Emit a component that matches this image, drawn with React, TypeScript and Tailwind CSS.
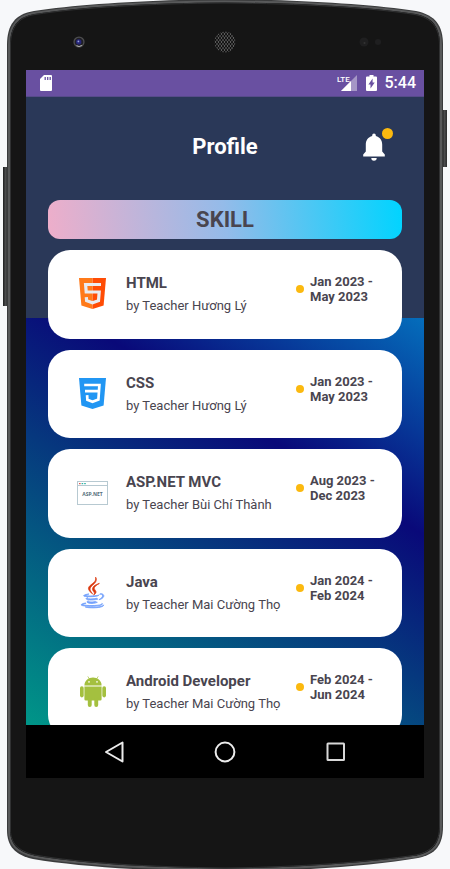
import React from "react";

type Skill = {
  name: string;
  teacher: string;
  from: string;
  to: string;
  icon: React.ReactNode;
};

function HtmlIcon() {
  return (
    <svg viewBox="0 0 27 31" className="h-[31px] w-[27px]" aria-hidden="true">
      <path d="M0 0H13.5V31L2.4 27.6Z" fill="#ff7a1a" />
      <path d="M13.5 0H27L24.6 27.6L13.5 31Z" fill="#ff4c05" />
      <path
        d="M22 6.5H6.6L7.2 14H20.2L19.5 22.7L13.5 24.8L7.6 22.7L7.3 19.2"
        fill="none"
        stroke="#e9ebf0"
        strokeWidth="3.2"
      />
    </svg>
  );
}

function CssIcon() {
  return (
    <svg viewBox="0 0 27 31" className="h-[31px] w-[27px]" aria-hidden="true">
      <path d="M0 0H27L24.6 27.6L13.5 31L2.4 27.6Z" fill="#2196f3" />
      <path
        d="M5.2 7H20.4L19.4 21.5L13.5 23.7L8.4 21.8L8.1 17.2M6 13.2H19.8"
        fill="none"
        stroke="#ffffff"
        strokeWidth="2.7"
      />
    </svg>
  );
}

function AspNetIcon() {
  return (
    <svg viewBox="0 0 31 24" className="h-[24px] w-[31px]" aria-hidden="true">
      <rect x="0.5" y="0.5" width="30" height="23" fill="#fff" stroke="#b7c9d1" />
      <path d="M0.5 4.5H30.5" stroke="#b7c9d1" />
      <rect x="2" y="2" width="1.6" height="1.2" fill="#e2574c" />
      <rect x="4.6" y="2" width="1.6" height="1.2" fill="#2fb5a8" />
      <rect x="7.2" y="2" width="1.6" height="1.2" fill="#2fb5a8" />
      <text
        x="15.5"
        y="15.4"
        textAnchor="middle"
        fontSize="5"
        fontWeight="700"
        fontFamily='"Open Sans", sans-serif'
        fill="#546e7a"
      >
        ASP.NET
      </text>
    </svg>
  );
}

function JavaIcon() {
  return (
    <svg viewBox="0 0 384 512" className="h-[31px] w-[23px] overflow-visible" aria-hidden="true">
      <path
        fill="#db380e"
        stroke="#db380e"
        strokeWidth="12"
        d="M192.34 280.8c-19-42.7-83.1-80.2 0-145.8C296 53.2 242.84 0 242.84 0c21.5 84.5-75.6 110.1-110.7 162.6-23.9 35.9 11.7 74.4 60.2 118.2zM306.94 104.6c.1 0-175.2 43.8-91.5 140.2 24.7 28.4-6.5 54-6.5 54s62.7-32.4 33.9-72.9c-26.9-37.8-47.5-56.6 64.1-121.3z"
      />
      <path
        fill="#73a1fb"
        stroke="#73a1fb"
        strokeWidth="14"
        d="M277.74 312.9c9.8-6.7 23.4-12.5 23.4-12.5s-38.7 7-77.2 10.2c-47.1 3.9-97.7 4.7-123.1 1.3-60.1-8 33-30.1 33-30.1s-36.1-2.4-80.6 19c-52.5 25.4 130 37 224.5 12.1zM300.84 375.1a12.19 12.19 0 0 1-2 2.6c128.3-33.7 81.1-118.9 19.8-97.3a17.33 17.33 0 0 0-8.2 6.3 70.45 70.45 0 0 1 11-3c31-6.5 75.5 41.5-20.6 91.4zM348 437.4s14.5 11.9-15.9 21.2c-57.9 17.5-240.8 22.8-291.6.7-18.3-7.9 16-19 26.8-21.3 11.2-2.4 17.7-2 17.7-2-20.3-14.3-131.3 28.1-56.4 40.2C232.84 509.4 401 461.3 348 437.4zM124.44 396c-78.7 22 47.9 67.4 148.1 24.5a185.89 185.89 0 0 1-28.2-13.8c-44.7 8.5-65.4 9.1-106 4.5-33.5-3.8-13.9-15.2-13.9-15.2zM304.24 493.2c-78.7 14.8-175.8 13.1-233.3 3.6 0-.1 11.8 9.7 72.4 13.6 92.2 5.9 233.8-3.3 237.1-46.9 0 0-6.4 16.5-76.2 29.7zM260.64 353c-59.2 11.4-93.5 11.1-136.8 6.6-33.5-3.5-11.6-19.7-11.6-19.7-86.8 28.8 48.2 61.4 169.5 25.9a60.37 60.37 0 0 1-21.1-12.8z"
      />
    </svg>
  );
}

function AndroidIcon() {
  return (
    <svg viewBox="0 0 26 31" className="h-[31px] w-[26px]" aria-hidden="true">
      <g fill="#a4c03f">
        <path d="M4.4 9.4C4.6 4.6 8.6 1.6 13 1.6S21.4 4.6 21.6 9.4Z" />
        <path d="M4.4 10.4H21.6V23.2a1.4 1.4 0 0 1-1.4 1.4H5.8a1.4 1.4 0 0 1-1.4-1.4Z" />
        <rect x="0" y="10.2" width="3.7" height="11.2" rx="1.8" />
        <rect x="22.3" y="10.2" width="3.7" height="11.2" rx="1.8" />
        <rect x="7.8" y="21" width="3.9" height="10" rx="1.9" />
        <rect x="14.3" y="21" width="3.9" height="10" rx="1.9" />
      </g>
      <path d="M7.8 0.4L9.4 3M18.2 0.4L16.6 3" stroke="#a4c03f" strokeWidth="0.7" />
      <circle cx="9" cy="5.9" r="0.8" fill="#fff" />
      <circle cx="17" cy="5.9" r="0.8" fill="#fff" />
    </svg>
  );
}

const skills: Skill[] = [
  { name: "HTML", teacher: "Hương Lý", from: "Jan 2023", to: "May 2023", icon: <HtmlIcon /> },
  { name: "CSS", teacher: "Hương Lý", from: "Jan 2023", to: "May 2023", icon: <CssIcon /> },
  { name: "ASP.NET MVC", teacher: "Bùi Chí Thành", from: "Aug 2023", to: "Dec 2023", icon: <AspNetIcon /> },
  { name: "Java", teacher: "Mai Cường Thọ", from: "Jan 2024", to: "Feb 2024", icon: <JavaIcon /> },
  { name: "Android Developer", teacher: "Mai Cường Thọ", from: "Feb 2024", to: "Jun 2024", icon: <AndroidIcon /> },
];

// Handset illustration behind the screen: rim, face and side keys.
function DeviceShell() {
  return (
    <svg
      viewBox="0 0 450 869"
      preserveAspectRatio="none"
      className="absolute inset-0 h-full w-full"
      aria-hidden="true"
    >
      <defs>
        <linearGradient id="key" x1="0" x2="1" y1="0" y2="0">
          <stop offset="0" stopColor="#1c1d1e" />
          <stop offset="0.5" stopColor="#4a4b4c" />
          <stop offset="1" stopColor="#2a2b2c" />
        </linearGradient>
      </defs>
      <rect x="3" y="167" width="5" height="139" fill="url(#key)" />
      <rect x="442" y="110" width="5" height="57" fill="url(#key)" />
      <path
        d="M7 45C7 25 15 14 34 11C80 4 150 0 225 -1C300 0 370 4 416 11C435 15 443 25 443 45V826C443 845 436 854 418 858C370 866 300 871 225 872C150 871 80 867 33 859C15 855 7 846 7 830Z"
        fill="#3a3b3c"
      />
      <path
        d="M9 45C9 26.500 16.500 16 34 13C80 6 150 2 225 1.500C300 2 370 6 416 13C433.500 16.500 441 26.500 441 45V826C441 843.500 434.500 852.500 417 856.500C370 863.500 300 868.500 225 869.500C150 868.500 80 864.500 34 856.500C16.500 852.500 9 844.500 9 830Z"
        fill="#151515"
        stroke="#58595a"
        strokeWidth="2"
      />
      <path
        d="M10.500 45C10.500 28 18 17 35 14.500C80 7.500 150 3.500 225 3C300 3.500 370 7.500 415 14.500C432 18 439.500 28 439.500 45V826C439.500 842 433 851 416 855C370 862 300 867 225 868C150 867 80 863 35 855C18 851 10.500 843 10.500 830Z"
        fill="#151515"
        stroke="#303132"
        strokeWidth="1"
      />
    </svg>
  );
}

function Camera() {
  return (
    <svg viewBox="0 0 12 12" className="size-3" aria-hidden="true">
      <circle cx="6" cy="6" r="5.600" fill="#4e4e50" />
      <circle cx="6" cy="6" r="4.300" fill="#202024" />
      <circle cx="5.700" cy="5.900" r="2.700" fill="#252579" />
      <circle cx="5.400" cy="5.400" r="0.900" fill="#9ba4dd" />
      <path d="M3.500 9.600Q6 11.600 8.800 9.400" fill="none" stroke="#b9b9b9" strokeWidth="1" />
    </svg>
  );
}

function Speaker() {
  return (
    <svg viewBox="0 0 22 22" className="size-[22px]" aria-hidden="true">
      <defs>
        <pattern id="mesh" width="3" height="4" patternUnits="userSpaceOnUse">
          <rect width="3" height="4" fill="#5c5c5c" />
          <circle cx="1.500" cy="1" r="1.050" fill="#0c0c0c" />
          <circle cx="0" cy="3" r="1.050" fill="#0c0c0c" />
          <circle cx="3" cy="3" r="1.050" fill="#0c0c0c" />
        </pattern>
      </defs>
      <circle cx="11" cy="11" r="10.500" fill="url(#mesh)" />
    </svg>
  );
}

function Sensors() {
  return (
    <svg viewBox="0 0 24 10" className="h-[10px] w-6" aria-hidden="true">
      <circle cx="5" cy="5" r="4.500" fill="#1f1f20" />
      <circle cx="5.500" cy="6" r="1" fill="#343435" />
      <circle cx="19" cy="5" r="3" fill="#1f1f20" />
    </svg>
  );
}

function StatusBar() {
  return (
    <div className="flex h-[27px] items-center border-b border-[#574b8a] bg-[#6950a1] pr-2 pl-[14px] text-white">
      <svg viewBox="0 0 12 16" className="h-4 w-3" aria-hidden="true">
        <path d="M4 0H11a1 1 0 0 1 1 1V15a1 1 0 0 1-1 1H1a1 1 0 0 1-1-1V4Z" fill="#fff" />
        <path d="M5.200 2V5M7.700 2V5M10.200 2V5" stroke="#6950a1" strokeWidth="1.300" />
      </svg>
      <svg viewBox="0 0 20 16" className="ml-auto h-4 w-5" aria-hidden="true">
        <path d="M20 0V16H4Z" fill="#fff" opacity="0.4" />
        <path d="M14 6V16H4Z" fill="#fff" />
        <path d="M8 0H13V7H8Z" fill="#6950a1" />
        <text x="0" y="7" fontSize="8" fontWeight="500" fontFamily="Roboto, sans-serif" fill="#fff">
          LTE
        </text>
      </svg>
      <svg viewBox="0 0 11 16" className="ml-[9px] h-4 w-[11px]" aria-hidden="true">
        <path d="M3.500 0H7.500V1.500H10a1 1 0 0 1 1 1V15a1 1 0 0 1-1 1H1a1 1 0 0 1-1-1V2.500a1 1 0 0 1 1-1H3.500Z" fill="#fff" />
        <path d="M6.600 3.500V7.600H8.700L4.500 13.600V9.500H2.400Z" fill="#6950a1" />
      </svg>
      <time className="ml-2 text-base leading-5 font-medium">5:44</time>
    </div>
  );
}

function SkillCard({ skill }: { skill: Skill }) {
  return (
    <li className="flex flex-1 items-start rounded-[22px] bg-white pt-6 pr-[15px] pl-[29px] text-[#49454f]">
      <div className="mt-1 flex h-[31px] w-[31px] shrink-0 items-center justify-center">{skill.icon}</div>
      <div className="ml-[18px] min-w-0 flex-1">
        <h3 className="text-[15px] leading-[18px] font-bold whitespace-nowrap">{skill.name}</h3>
        <p className="mt-[5px] text-[13px] leading-[18px] whitespace-nowrap">by Teacher {skill.teacher}</p>
      </div>
      <div className="flex shrink-0 items-center gap-[6px]">
        <span className="size-2 rounded-full bg-[#fbb90f]" />
        <p className="w-[77px] text-[13px] leading-[15px] font-bold whitespace-nowrap">
          {skill.from} -<br />
          {skill.to}
        </p>
      </div>
    </li>
  );
}

function ProfileScreen() {
  return (
    <main className="flex h-[628px] flex-col overflow-hidden bg-[linear-gradient(180deg,#2a3858_221px,transparent_221px),linear-gradient(32deg,#009688,#090979_50%,#00d4ff)] px-[22px]">
      <header className="mt-[26px] grid h-12 shrink-0 grid-cols-[1fr_auto_1fr] items-center">
        <h1 className="col-start-2 text-[22px] leading-7 font-bold text-white">Profile</h1>
        <button type="button" aria-label="Notifications" className="relative mr-4 justify-self-end">
          <svg viewBox="0 0 24 28" className="h-7 w-6" aria-hidden="true">
            <path
              d="M12 0.500a1.800 1.800 0 0 1 1.800 1.800V3C17.800 4 20.200 7.200 20.200 11.500V18.500L22.800 21.500V23.500H1.200V21.500L3.800 18.500V11.500C3.800 7.200 6.200 4 10.200 3V2.300A1.800 1.800 0 0 1 12 0.500ZM9.300 25H14.700A2.700 2.700 0 0 1 9.300 25Z"
              fill="#fff"
            />
          </svg>
          <span className="absolute -top-[5px] -right-[7px] size-[11px] rounded-full bg-[#fbb90f]" />
        </button>
      </header>
      <h2 className="mt-[29px] flex h-[39px] shrink-0 items-center justify-center rounded-xl bg-[linear-gradient(84deg,#eeaeca,#94bbe9_50%,#00d4ff)] text-[22px] leading-7 font-bold text-[#49454f]">
        SKILL
      </h2>
      <ul className="mt-[11px] flex h-[487px] shrink-0 flex-col gap-[11px]">
        {skills.map((skill) => (
          <SkillCard key={skill.name} skill={skill} />
        ))}
      </ul>
    </main>
  );
}

function NavigationBar() {
  return (
    <nav className="flex h-[53px] items-center justify-center gap-[87px] bg-black">
      <button type="button" aria-label="Back">
        <svg viewBox="0 0 24 24" className="size-6" fill="none" stroke="#ececec" strokeWidth="2" strokeLinejoin="round" aria-hidden="true">
          <path d="M20.500 2.500V21.500L4 12Z" />
        </svg>
      </button>
      <button type="button" aria-label="Home">
        <svg viewBox="0 0 24 24" className="size-6" fill="none" stroke="#ececec" strokeWidth="2" aria-hidden="true">
          <circle cx="12" cy="12" r="9.400" />
        </svg>
      </button>
      <button type="button" aria-label="Recent apps">
        <svg viewBox="0 0 24 24" className="size-6" fill="none" stroke="#d8d8d8" strokeWidth="2" aria-hidden="true">
          <rect x="3.500" y="3.500" width="16.500" height="16.500" rx="0.500" />
        </svg>
      </button>
    </nav>
  );
}

export default function App() {
  return (
    <div className="min-h-screen overflow-hidden bg-[#f7f8fa] font-['Roboto',sans-serif]">
      <div className="relative">
        <DeviceShell />
        <div className="relative px-[26px] pb-[91px]">
          <div className="grid h-[70px] grid-cols-[1fr_auto_1fr] items-center pt-[14px]">
            <div className="pl-[47px]">
              <Camera />
            </div>
            <Speaker />
            <div className="flex justify-end pr-[41px]">
              <Sensors />
            </div>
          </div>
          <StatusBar />
          <ProfileScreen />
          <NavigationBar />
        </div>
      </div>
    </div>
  );
}
